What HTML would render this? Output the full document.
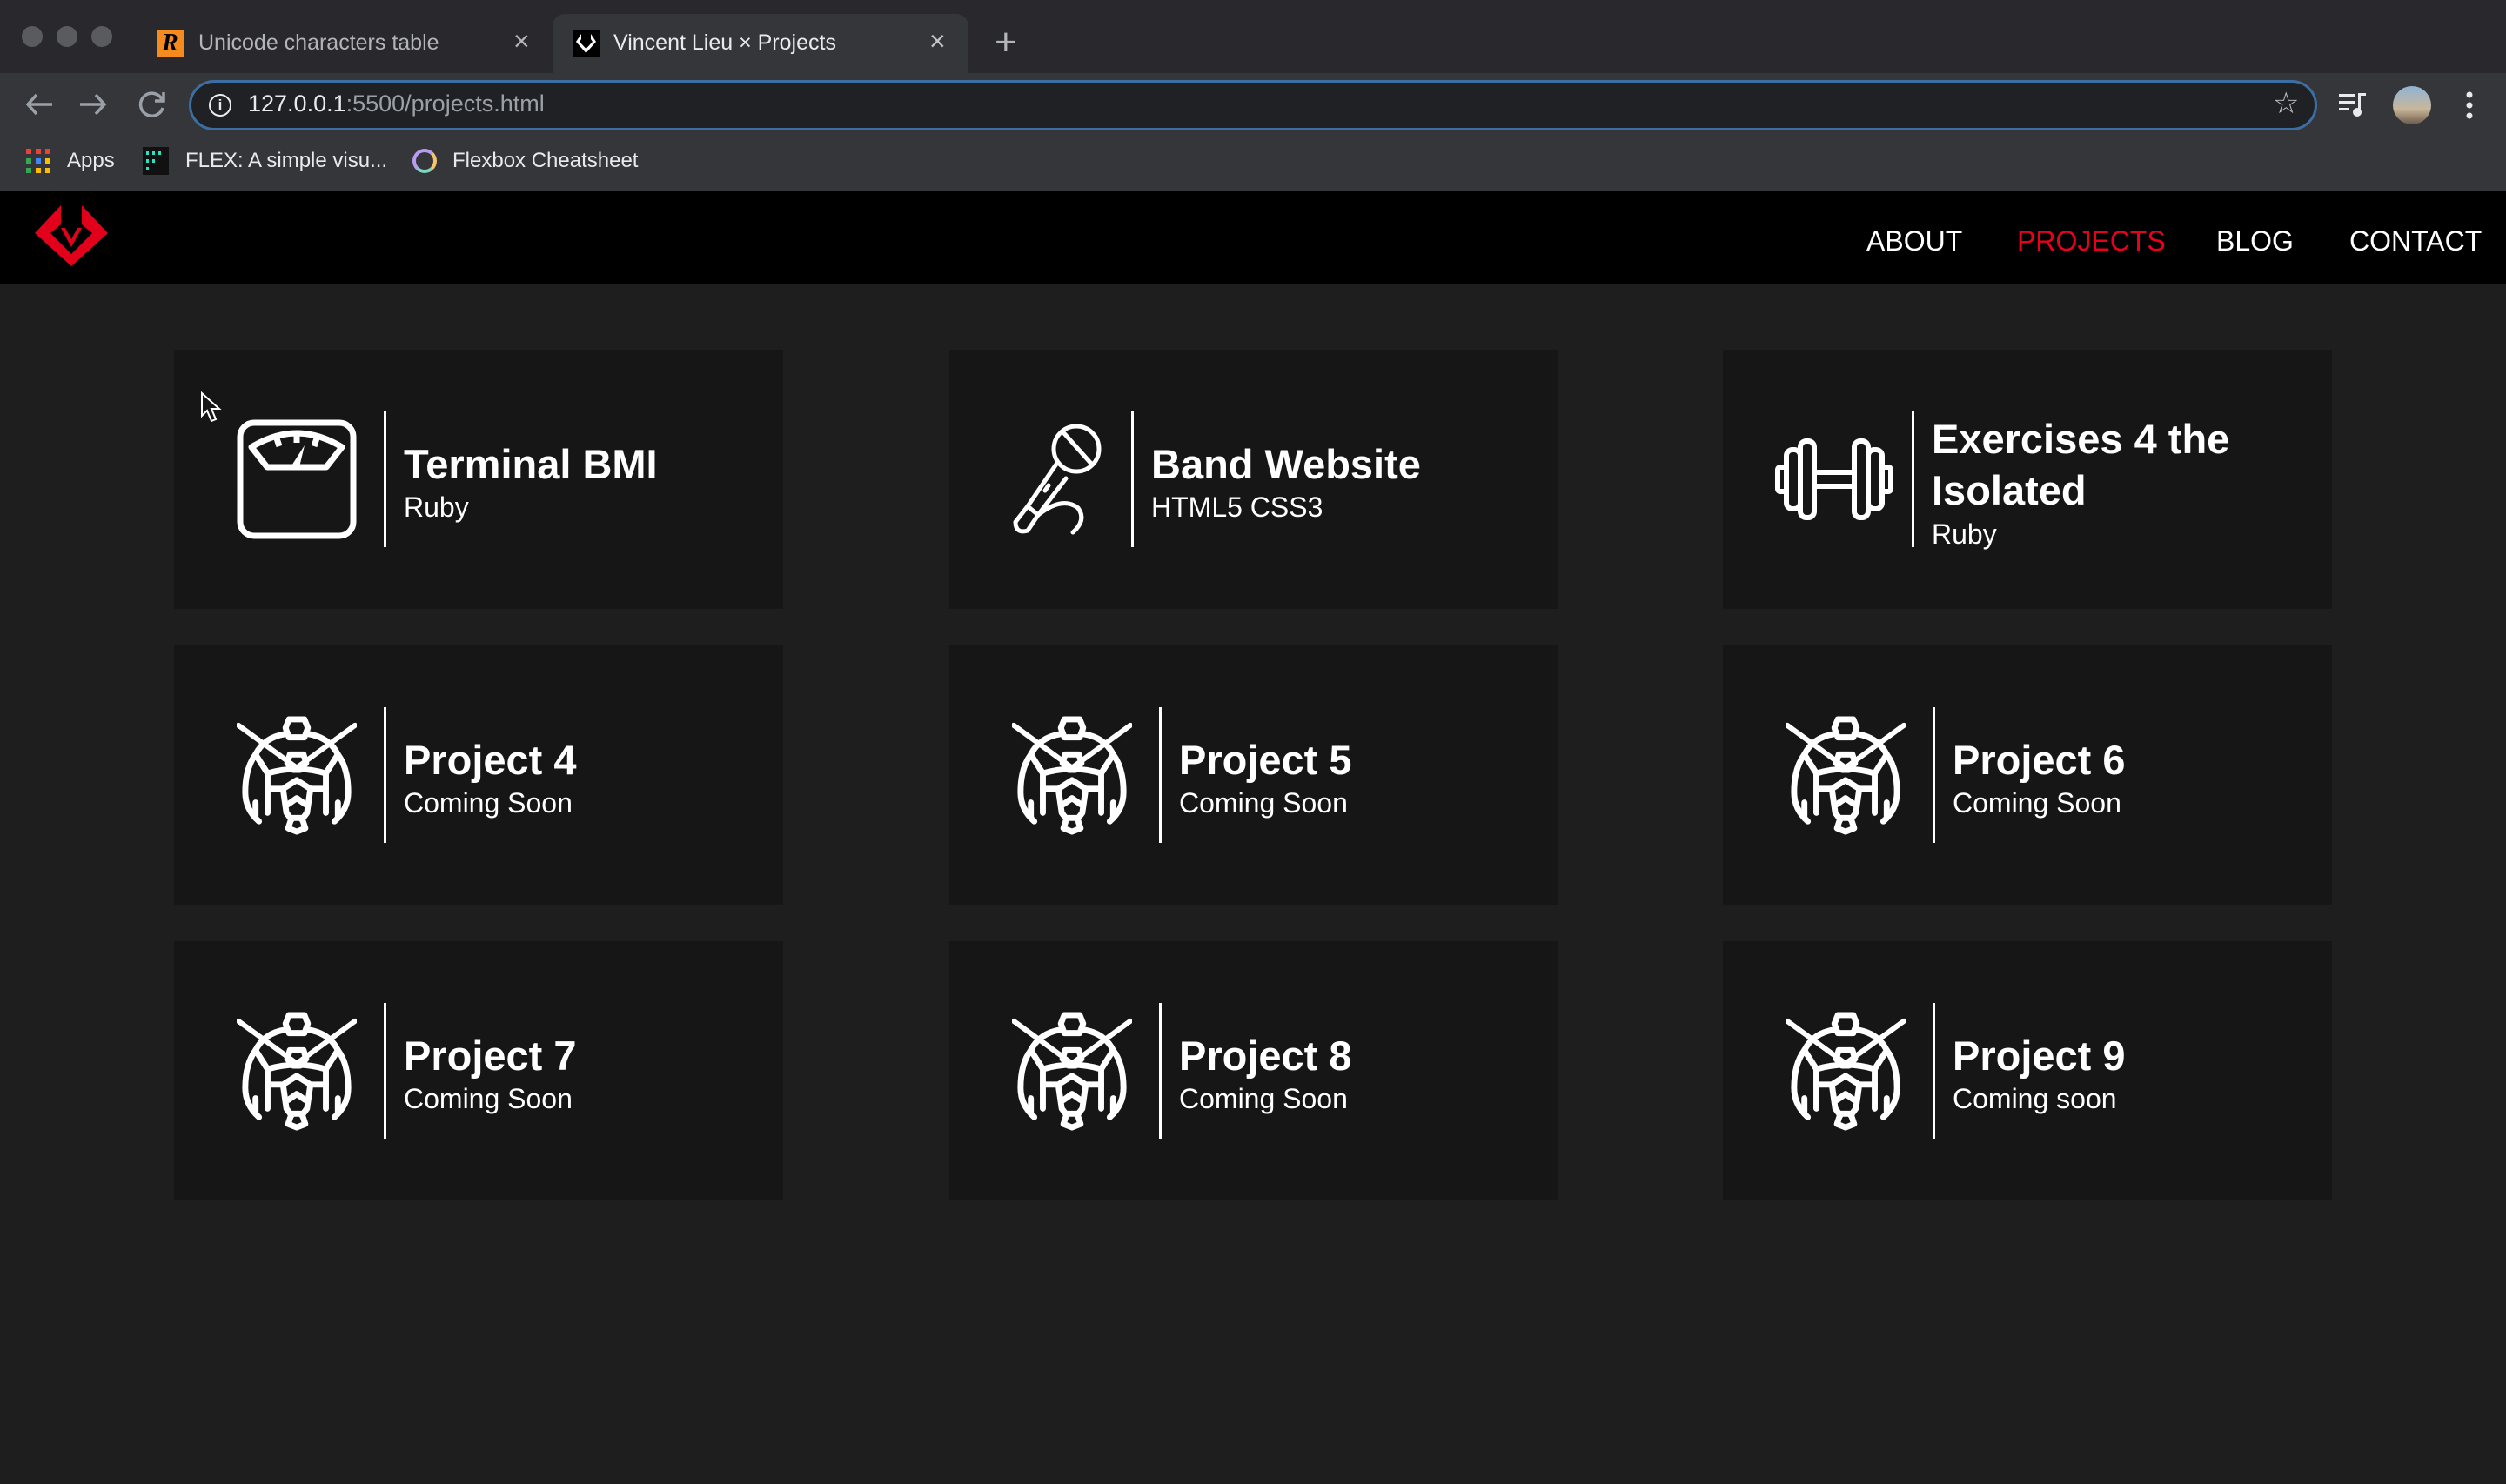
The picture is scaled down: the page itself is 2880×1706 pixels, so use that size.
<!DOCTYPE html>
<html><head><meta charset="utf-8"><style>
*{margin:0;padding:0;box-sizing:border-box}
body{width:2880px;height:1706px;background:#1e1e1e;font-family:"Liberation Sans",Arial,sans-serif;position:relative;overflow:hidden}
.abs{position:absolute}
#strip{left:0;top:0;width:2880px;height:84px;background:#29292d}
#toolbar{left:0;top:84px;width:2880px;height:70px;background:#35363a}
#bm{left:0;top:154px;width:2880px;height:66px;background:#35363a}
#nav{left:0;top:220px;width:2880px;height:107px;background:#000}
.dot{width:24px;height:24px;border-radius:50%;background:#5a5b5f;top:30px}
.tabtxt{font-size:25px;top:35px;white-space:nowrap}
.card{position:absolute;width:700px;height:298px;background:#161616;display:flex;align-items:center;padding-left:72px}
.ic{width:138px;height:140px;display:flex;align-items:center;justify-content:center}
.div{width:3px;height:156px;background:#fff;margin-left:31px;margin-right:20px}
.txt{padding-top:8px}
.t{color:#fff;font-weight:bold;font-size:47px;line-height:56px;max-width:420px}
.s{color:#fff;font-size:32px;line-height:42px}
.navl{top:259px;font-size:32px;color:#fff}
</style></head><body>
<div id="strip" class="abs"></div>
<div class="abs dot" style="left:25px"></div><div class="abs dot" style="left:65px"></div><div class="abs dot" style="left:105px"></div>
<div class="abs" style="left:180px;top:34px;width:31px;height:31px;background:#f58a1f;color:#000;font:italic bold 28px 'Liberation Serif',serif;text-align:center;line-height:31px">R</div>
<div class="abs tabtxt" style="left:228px;color:#b4b5b9">Unicode characters table</div>
<div class="abs" style="left:590px;top:29px;font-size:32px;color:#b4b5b9">×</div>
<div class="abs" style="left:635px;top:16px;width:478px;height:72px;background:#35363a;border-radius:14px 14px 0 0"></div>
<div class="abs" style="left:658px;top:34px;width:31px;height:31px;background:#000"><svg width="31" height="31" viewBox="0 0 31 31"><path d="M10 5 L4 14 L15.5 27 L27 14 L21 5 L21 11 L23 14 L15.5 22 L8 14 L10 11Z" fill="#fff"/></svg></div>
<div class="abs tabtxt" style="left:705px;color:#e8eaed">Vincent Lieu × Projects</div>
<div class="abs" style="left:1068px;top:29px;font-size:32px;color:#c4c5c9">×</div>
<div class="abs" style="left:1143px;top:24px;font-size:44px;color:#b4b5b9">+</div>
<div id="toolbar" class="abs"></div>
<svg class="abs" style="left:26px;top:100px" width="170" height="40" viewBox="0 0 170 40"><g stroke="#9aa0a6" stroke-width="3.5" fill="none"><path d="M34 20H6M16 9L6 20L16 31"/><path d="M66 20H94M84 9L94 20L84 31"/><path d="M160 14A13 13 0 1 0 161 24M162 6V16H152"/></g></svg>
<div class="abs" style="left:217px;top:92px;width:2446px;height:58px;border:3px solid #3c6ea3;border-radius:30px;background:#202124"></div>
<div class="abs" style="left:240px;top:108px;width:26px;height:26px;border:2.5px solid #e8eaed;border-radius:50%;color:#e8eaed;font:bold 17px 'Liberation Sans';text-align:center;line-height:22px">i</div>
<div class="abs" style="left:285px;top:104px;font-size:27px;color:#e8eaed">127.0.0.1<span style="color:#9aa0a6">:5500/projects.html</span></div>
<div class="abs" style="left:2612px;top:99px;font-size:34px;color:#c4c5c9">☆</div>
<svg class="abs" style="left:2688px;top:105px" width="34" height="30"><g fill="#e8eaed"><rect x="0" y="3" width="18" height="3"/><rect x="0" y="11" width="18" height="3"/><rect x="0" y="19" width="12" height="3"/><rect x="22" y="2" width="3" height="22"/><rect x="22" y="2" width="9" height="3"/><circle cx="21" cy="24" r="5"/></g></svg>
<div class="abs" style="left:2750px;top:99px;width:44px;height:44px;border-radius:50%;background:linear-gradient(#8fb4d6,#c9b79a 60%,#6b5a4c)"></div>
<svg class="abs" style="left:2830px;top:104px" width="16" height="34"><g fill="#e8eaed"><circle cx="8" cy="5" r="3.5"/><circle cx="8" cy="17" r="3.5"/><circle cx="8" cy="29" r="3.5"/></g></svg>
<div id="bm" class="abs"></div>
<svg class="abs" style="left:30px;top:171px" width="30" height="30"><g><rect x="0" y="0" width="6" height="6" fill="#ea4335"/><rect x="11" y="0" width="6" height="6" fill="#ea4335"/><rect x="22" y="0" width="6" height="6" fill="#ea4335"/><rect x="0" y="11" width="6" height="6" fill="#34a853"/><rect x="11" y="11" width="6" height="6" fill="#4285f4"/><rect x="22" y="11" width="6" height="6" fill="#fbbc05"/><rect x="0" y="22" width="6" height="6" fill="#34a853"/><rect x="11" y="22" width="6" height="6" fill="#fbbc05"/><rect x="22" y="22" width="6" height="6" fill="#fbbc05"/></g></svg>
<div class="abs" style="left:77px;top:171px;font-size:24px;color:#e8eaed">Apps</div>
<div class="abs" style="left:164px;top:169px;width:30px;height:32px;background:#111"><svg width="30" height="32"><g fill="#2de0c4"><rect x="4" y="5" width="3" height="4"/><rect x="11" y="5" width="3" height="4"/><rect x="18" y="5" width="3" height="4"/><rect x="4" y="14" width="3" height="4"/><rect x="11" y="14" width="3" height="4"/><rect x="4" y="23" width="3" height="4"/></g></svg></div>
<div class="abs" style="left:213px;top:171px;font-size:24px;color:#e8eaed">FLEX: A simple visu...</div>
<div class="abs" style="left:474px;top:171px;width:28px;height:28px;border-radius:50%;border:4px solid #b89cf0;border-right-color:#f3c66b;border-bottom-color:#7ed8c0"></div>
<div class="abs" style="left:520px;top:171px;font-size:24px;color:#e8eaed">Flexbox Cheatsheet</div>
<div id="nav" class="abs"></div>
<svg class="abs" style="left:38px;top:232px" width="90" height="78" viewBox="38 232 90 78"><path d="M70,236 L40,268 L82,306 L124,268 L94,236 L94,258 L106,268 L82,292 L58,268 L70,258 Z" fill="#e3001b"/><path d="M70,262 L82,284 L94,262 L89,262 L82,275 L75,262Z" fill="#e3001b"/></svg>
<div class="abs navl" style="left:2145px">ABOUT</div>
<div class="abs navl" style="left:2318px;color:#e8001c">PROJECTS</div>
<div class="abs navl" style="left:2547px">BLOG</div>
<div class="abs navl" style="left:2700px">CONTACT</div>

<div class="card" style="left:200px;top:402px">
 <div class="ic"><svg width="138" height="138" viewBox="0 0 138 138"><g stroke="#fff" stroke-width="7" fill="none" stroke-linejoin="round"><rect x="4" y="4" width="130" height="130" rx="16"/><path d="M17 32 Q69 0 121 32 L103 55 H35 Z"/><path d="M69 16V27M46 22L49 31M92 22L89 31"/></g><path d="M78 30 L62 55 H72 Z" fill="#fff"/></svg></div>
 <div class="div"></div>
 <div class="txt"><div class="t">Terminal BMI</div><div class="s">Ruby</div></div>
</div>
<div class="card" style="left:1091px;top:402px">
 <div class="ic" style="width:104px"><svg width="104" height="130" viewBox="0 0 104 130"><g stroke="#fff" stroke-width="5" fill="none" stroke-linecap="round" stroke-linejoin="round"><circle cx="74" cy="30" r="26"/><path d="M58 10 L92 48"/><path d="M52 46 L18 96 L30 106 L62 64"/><path d="M18 96 L4 114 Q4 128 18 124 L30 106"/><path d="M30 106 Q58 84 76 98 Q86 112 70 126"/><path d="M38 78 L42 72"/></g></svg></div>
 <div class="div" style="margin-left:33px"></div>
 <div class="txt"><div class="t">Band Website</div><div class="s">HTML5 CSS3</div></div>
</div>
<div class="card" style="left:1980px;top:402px;padding-left:59px">
 <div class="ic"><svg width="138" height="96" viewBox="0 0 138 96"><g stroke="#fff" stroke-width="6" fill="#161616" stroke-linejoin="round"><rect x="4" y="34" width="10" height="28" rx="3"/><rect x="124" y="34" width="10" height="28" rx="3"/><rect x="14" y="14" width="16" height="68" rx="7"/><rect x="30" y="4" width="16" height="88" rx="7"/><rect x="108" y="14" width="16" height="68" rx="7"/><rect x="92" y="4" width="16" height="88" rx="7"/><path d="M46 40H92M46 56H92"/></g></svg></div>
 <div class="div" style="margin-left:20px"></div>
 <div class="txt"><div class="t" style="line-height:59px">Exercises 4 the Isolated</div><div class="s">Ruby</div></div>
</div>

<div class="card" style="left:200px;top:742px"><div class="ic"><svg width="138" height="140" viewBox="0 0 140 136"><use href="#g"/></svg></div><div class="div"></div><div class="txt"><div class="t">Project 4</div><div class="s">Coming Soon</div></div></div>
<div class="card" style="left:1091px;top:742px"><div class="ic"><svg width="138" height="140" viewBox="0 0 140 136"><use href="#g"/></svg></div><div class="div"></div><div class="txt"><div class="t">Project 5</div><div class="s">Coming Soon</div></div></div>
<div class="card" style="left:1980px;top:742px"><div class="ic"><svg width="138" height="140" viewBox="0 0 140 136"><use href="#g"/></svg></div><div class="div"></div><div class="txt"><div class="t">Project 6</div><div class="s">Coming Soon</div></div></div>
<div class="card" style="left:200px;top:1082px"><div class="ic"><svg width="138" height="140" viewBox="0 0 140 136"><use href="#g"/></svg></div><div class="div"></div><div class="txt"><div class="t">Project 7</div><div class="s">Coming Soon</div></div></div>
<div class="card" style="left:1091px;top:1082px"><div class="ic"><svg width="138" height="140" viewBox="0 0 140 136"><use href="#g"/></svg></div><div class="div"></div><div class="txt"><div class="t">Project 8</div><div class="s">Coming Soon</div></div></div>
<div class="card" style="left:1980px;top:1082px"><div class="ic"><svg width="138" height="140" viewBox="0 0 140 136"><use href="#g"/></svg></div><div class="div"></div><div class="txt"><div class="t">Project 9</div><div class="s">Coming soon</div></div></div>

<svg width="0" height="0" style="position:absolute"><defs><g id="g" stroke="#fff" stroke-width="7" fill="none" stroke-linejoin="round" stroke-linecap="round">
<path d="M61 3H79L83 13L79 24H61L57 13Z"/>
<path d="M2 10L68 58M138 10L72 58" stroke-width="6"/>
<path d="M57 20 Q32 24 22 44 Q10 60 10 88 Q10 108 26 122"/>
<path d="M83 20 Q108 24 118 44 Q130 60 130 88 Q130 108 114 122"/>
<path d="M22 44 L36 66 M118 44 L104 66"/>
<path d="M62 44H78L81 54L74 62H66L59 54Z"/>
<path d="M36 66 Q70 56 104 66 L104 84 L86 84 L70 74 L54 84 L36 84 Z"/>
<path d="M36 84 L36 112 M104 84 L104 112"/>
<path d="M54 84 L58 112 L64 120 M86 84 L82 112 L76 120"/>
<path d="M60 102 L70 95 L80 102"/>
<path d="M64 118H76L80 130L70 134L60 130Z"/>
<path d="M22 100V118M118 100V118"/>
</g></defs></svg>

<svg class="abs" style="left:230px;top:450px" width="26" height="38" viewBox="0 0 26 38"><path d="M2 2 L2 28 L8 22 L13 34 L18 32 L13 20 L22 20 Z" fill="#161616" stroke="#fff" stroke-width="2"/></svg>
</body></html>
